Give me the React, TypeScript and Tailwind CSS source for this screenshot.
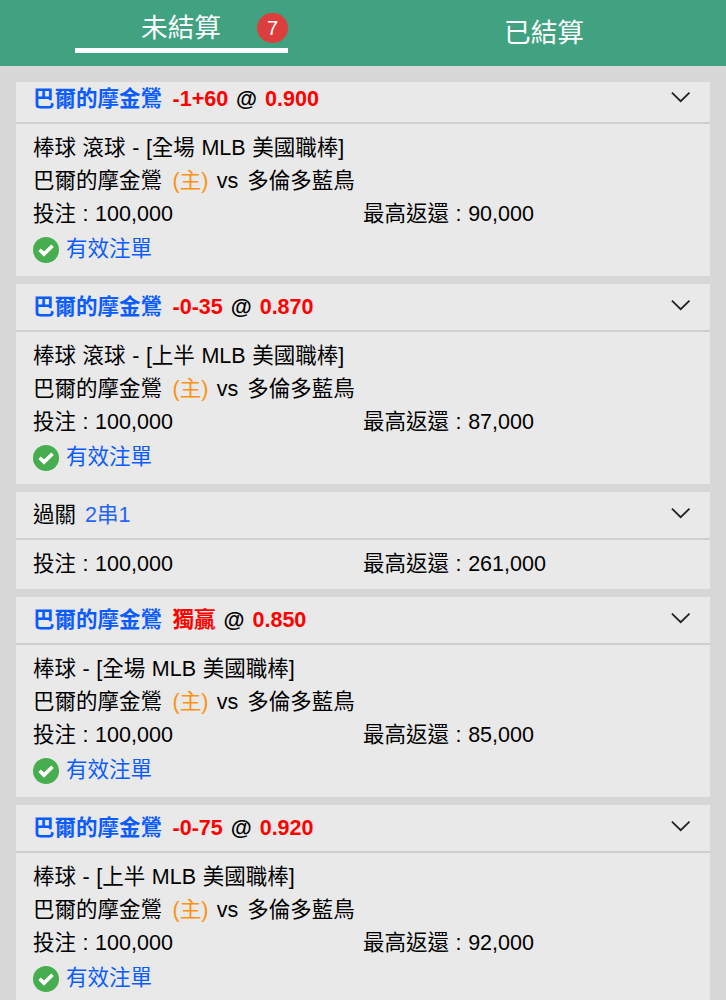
import React from 'react';

type Bet = {
  pick: string;
  odds: string;
  league: string;
  payout: string;
};

const Chevron = () => (
  <svg className="mb-[6px] h-[12px] w-[20px] shrink-0" viewBox="0 0 20 12" fill="none" stroke="#222" strokeWidth="1.8">
    <path d="M.9 1.6 9.7 10.2l8.8-8.6" />
  </svg>
);

const Check = () => (
  <svg className="h-[26px] w-[26px] shrink-0" viewBox="0 0 26 26">
    <circle cx="13" cy="13" r="13" fill="#46ae4e" />
    <path d="M6.6 12.8 11 17.1 19.5 8.8" fill="none" stroke="#fff" strokeWidth="3.7" />
  </svg>
);

const Amounts = ({ payout }: { payout: string }) => (
  <div className="flex h-[33px] items-center">
    <span className="w-[330px]">投注 : 100,000</span>
    <span>最高返還 : {payout}</span>
  </div>
);

const CardHeader = ({ children }: { children: React.ReactNode }) => (
  <div className="flex h-[48px] items-center justify-between border-b-2 border-[#cfcfcf] pt-[2px] pr-[19px] pl-[17px]">
    {children}
    <Chevron />
  </div>
);

const BetCard = ({ pick, odds, league, payout }: Bet) => (
  <section className="h-[200px] shrink-0 bg-[#e9e9e9]">
    <CardHeader>
      <div className="flex items-center font-bold">
        <span className="text-[#0a5cff]">巴爾的摩金鶯</span>
        <span className="ml-[10.5px] text-[#ff0000]">{pick}</span>
        <span className="ml-[8px]">@</span>
        <span className="ml-[8px] text-[#ff0000]">{odds}</span>
      </div>
    </CardHeader>
    <div className="px-[17px] pt-[8px]">
      <div className="flex h-[33px] items-center whitespace-pre">{league}</div>
      <div className="flex h-[33px] items-center">
        <span>巴爾的摩金鶯</span>
        <span className="ml-[10.5px] text-[#ff9112]">(主)</span>
        <span className="ml-[8.5px]">vs</span>
        <span className="ml-[9px]">多倫多藍鳥</span>
      </div>
      <Amounts payout={payout} />
      <div className="flex h-[37px] items-center gap-[7px] text-[#0a5cff]">
        <Check />
        <span className="pt-px">有效注單</span>
      </div>
    </div>
  </section>
);

export default function App() {
  return (
    <div className="flex h-[1000px] w-[726px] flex-col overflow-hidden bg-[#d7d7d7] font-['Liberation_Sans','Noto_Sans_CJK_TC',sans-serif] text-[21.5px] leading-none text-black [word-spacing:0.6px]">
      <nav className="flex h-[66px] shrink-0 bg-[#40a280] text-[26.7px] text-white">
        <div className="flex w-[363px] justify-center">
          <div className="relative flex h-[53px] w-[213px] justify-center border-b-[5px] border-white pt-[15px] pr-px">
            <span>未結算</span>
            <span className="absolute top-[13px] right-0 flex h-[30px] w-[31px] items-center justify-center rounded-full bg-[#dc3d3d] text-[20px]">
              7
            </span>
          </div>
        </div>
        <div className="flex w-[363px] justify-center pt-[20px] pr-px">已結算</div>
      </nav>
      <main className="mx-4 mt-4 flex min-h-0 flex-1 flex-col overflow-hidden">
        <div className="-mt-[6px] flex w-[694px] flex-col gap-2">
          <BetCard pick="-1+60" odds="0.900" league="棒球 滾球 - [全場 MLB 美國職棒]" payout="90,000" />
          <BetCard pick="-0-35" odds="0.870" league="棒球 滾球 - [上半 MLB 美國職棒]" payout="87,000" />
          <section className="h-[97px] shrink-0 bg-[#e9e9e9]">
            <CardHeader>
              <div className="flex items-center">
                <span>過關</span>
                <span className="ml-[9px] text-[#2464f5]">2串1</span>
              </div>
            </CardHeader>
            <div className="px-[17px] pt-[8px]">
              <Amounts payout="261,000" />
            </div>
          </section>
          <BetCard pick="獨贏" odds="0.850" league="棒球 - [全場 MLB 美國職棒]" payout="85,000" />
          <BetCard pick="-0-75" odds="0.920" league="棒球 - [上半 MLB 美國職棒]" payout="92,000" />
        </div>
      </main>
    </div>
  );
}
